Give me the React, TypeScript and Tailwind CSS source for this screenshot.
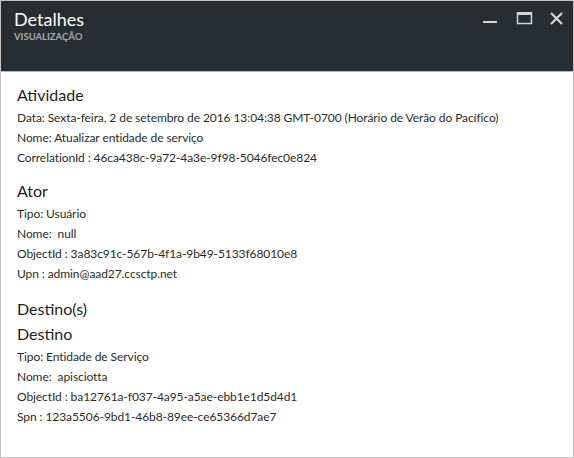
import React from "react";

const Line = ({ children }: { children: React.ReactNode }) => (
  <div className="h-5 leading-5 text-[12px] tracking-[-0.08px] text-[#2b2b2b]">{children}</div>
);

export default function App() {
  return (
    <div
      className="w-[574px] h-[458px] border border-[#c4c4c4] bg-white flex flex-col"
      style={{ fontFamily: 'Lato, "Open Sans", sans-serif' }}
    >
      <div className="h-[71px] bg-[#282d31] border-b border-[#b8b8b8] flex justify-between shrink-0">
        <div className="pl-[13px] pt-[6px]">
          <div className="text-[18px] leading-[24px] text-white">Detalhes</div>
          <div className="text-[9.5px] font-bold leading-[12px] text-[#a3aaac]">VISUALIZAÇÃO</div>
        </div>
        <div className="flex items-start pt-[11px] pr-[6px]">
          <svg width="34" height="14" viewBox="0 0 34 14">
            <rect x="4" y="9" width="14" height="2" fill="#d4d4d4" />
          </svg>
          <svg width="34" height="14" viewBox="0 0 34 14">
            <rect x="4.5" y="0.5" width="14" height="11" fill="none" stroke="#d4d4d4" strokeWidth="1.5" />
            <rect x="4" y="0" width="15" height="3" fill="#d4d4d4" />
          </svg>
          <svg width="20" height="14" viewBox="0 0 20 14">
            <path d="M4 1 L15 12 M15 1 L4 12" stroke="#d4d4d4" strokeWidth="2.2" />
          </svg>
        </div>
      </div>
      <div className="pl-[16px] pt-[13px]">
        <div className="text-[16px] leading-[20px] text-[#1e1e1e]">Atividade</div>
        <div className="mt-[3px]">
          <Line>Data: Sexta-feira, 2 de setembro de 2016 13:04:38 GMT-0700 (Horário de Verão do Pacífico)</Line>
          <Line>Nome: Atualizar entidade de serviço</Line>
          <Line>CorrelationId : 46ca438c-9a72-4a3e-9f98-5046fec0e824</Line>
        </div>
        <div className="text-[16px] leading-[20px] text-[#1e1e1e] mt-[13px]">Ator</div>
        <div className="mt-[3px]">
          <Line>Tipo: Usuário</Line>
          <Line>Nome:&nbsp; null</Line>
          <Line>ObjectId : 3a83c91c-567b-4f1a-9b49-5133f68010e8</Line>
          <Line>Upn : admin@aad27.ccsctp.net</Line>
        </div>
        <div className="text-[16px] leading-[20px] text-[#1e1e1e] mt-[15px]">Destino(s)</div>
        <div className="text-[16px] leading-[20px] text-[#1e1e1e] mt-[5px]">Destino</div>
        <div className="mt-[3px]">
          <Line>Tipo: Entidade de Serviço</Line>
          <Line>Nome:&nbsp; apisciotta</Line>
          <Line>ObjectId : ba12761a-f037-4a95-a5ae-ebb1e1d5d4d1</Line>
          <Line>Spn : 123a5506-9bd1-46b8-89ee-ce65366d7ae7</Line>
        </div>
      </div>
    </div>
  );
}
